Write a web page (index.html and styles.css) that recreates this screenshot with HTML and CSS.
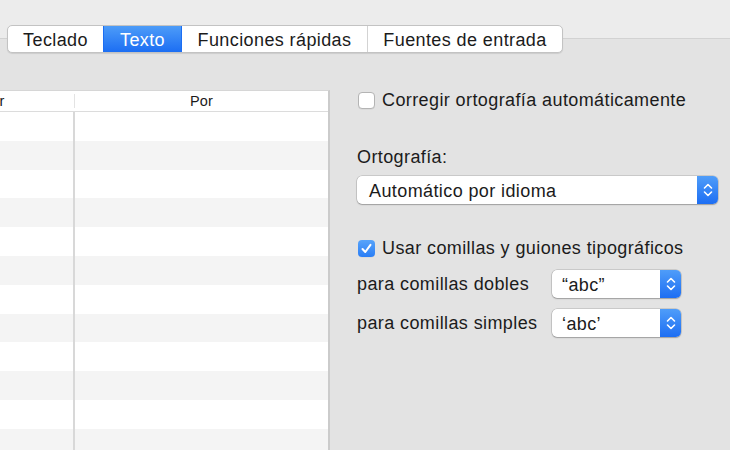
FILE: index.html
```html
<!DOCTYPE html>
<html lang="es">
<head>
<meta charset="utf-8">
<title>Texto</title>
<link rel="stylesheet" href="styles.css">
</head>
<body>
<div class="top">
  <div class="tabs">
    <div class="tab tab-teclado">Teclado</div>
    <div class="tab tab-texto active">Texto</div>
    <div class="tab tab-funciones">Funciones rápidas</div>
    <div class="tab tab-fuentes">Fuentes de entrada</div>
  </div>
</div>
<div class="content">
  <div class="table">
    <div class="thead">
      <div class="h1">Reemplazar</div>
      <div class="h2">Por</div>
    </div>
    <div class="tbody">
      <div class="row"><div class="c1"></div><div class="c2"></div></div>
      <div class="row"><div class="c1"></div><div class="c2"></div></div>
      <div class="row"><div class="c1"></div><div class="c2"></div></div>
      <div class="row"><div class="c1"></div><div class="c2"></div></div>
      <div class="row"><div class="c1"></div><div class="c2"></div></div>
      <div class="row"><div class="c1"></div><div class="c2"></div></div>
      <div class="row"><div class="c1"></div><div class="c2"></div></div>
      <div class="row"><div class="c1"></div><div class="c2"></div></div>
      <div class="row"><div class="c1"></div><div class="c2"></div></div>
      <div class="row"><div class="c1"></div><div class="c2"></div></div>
      <div class="row"><div class="c1"></div><div class="c2"></div></div>
      <div class="row"><div class="c1"></div><div class="c2"></div></div>
    </div>
  </div>
  <div class="panel">
    <label class="check-row row-corregir">
      <span class="box"></span>
      <span class="label">Corregir ortografía automáticamente</span>
    </label>
    <div class="field-label">Ortografía:</div>
    <div class="popup popup-wide">
      <span class="popup-text">Automático por idioma</span>
      <span class="stepper">
        <svg width="10" height="16" viewBox="0 0 10 16"><path d="M1.5 6 L5 2.5 L8.5 6 M1.5 10 L5 13.5 L8.5 10" fill="none" stroke="#fff" stroke-width="1.6" stroke-linecap="round" stroke-linejoin="round"/></svg>
      </span>
    </div>
    <label class="check-row row-usar">
      <span class="box checked">
        <svg width="13" height="13" viewBox="0 0 13 13"><path d="M2.5 7 L5.3 10 L10.5 2.8" fill="none" stroke="#fff" stroke-width="2" stroke-linecap="round" stroke-linejoin="round"/></svg>
      </span>
      <span class="label">Usar comillas y guiones tipográficos</span>
    </label>
    <div class="quote-row row-dobles">
      <span class="quote-label">para comillas dobles</span>
      <div class="popup popup-small">
        <span class="popup-text">“abc”</span>
        <span class="stepper">
          <svg width="10" height="16" viewBox="0 0 10 16"><path d="M1.5 6 L5 2.5 L8.5 6 M1.5 10 L5 13.5 L8.5 10" fill="none" stroke="#fff" stroke-width="1.6" stroke-linecap="round" stroke-linejoin="round"/></svg>
        </span>
      </div>
    </div>
    <div class="quote-row row-simples">
      <span class="quote-label">para comillas simples</span>
      <div class="popup popup-small">
        <span class="popup-text">‘abc’</span>
        <span class="stepper">
          <svg width="10" height="16" viewBox="0 0 10 16"><path d="M1.5 6 L5 2.5 L8.5 6 M1.5 10 L5 13.5 L8.5 10" fill="none" stroke="#fff" stroke-width="1.6" stroke-linecap="round" stroke-linejoin="round"/></svg>
        </span>
      </div>
    </div>
  </div>
</div>
</body>
</html>
```
FILE: styles.css
```css
* { box-sizing: border-box; }
html, body {
  margin: 0;
  height: 450px;
  overflow: hidden;
}
body {
  font-family: "Liberation Sans", Arial, sans-serif;
  font-size: 18px;
  letter-spacing: 0.4px;
  color: #1b1b1b;
  background: linear-gradient(to bottom, #ececec 0, #ececec 38px, #d2d2d2 38px, #d2d2d2 39px, #e3e3e3 39px);
}
.top {
  padding: 25px 0 0 7px;
  display: flex;
}
.tabs {
  display: flex;
  height: 28px;
  background: #fff;
  border: 1px solid #c3c3c3;
  border-radius: 5px;
  overflow: hidden;
  box-shadow: 0 1px 1px rgba(0,0,0,0.10);
}
.tab {
  display: flex;
  align-items: center;
  justify-content: center;
  line-height: 26px;
  padding-top: 1px;
  border-left: 1px solid #d3d3d3;
}
.tab-teclado { width: 95px; border-left: none; }
.tab-texto { width: 78px; }
.tab-funciones { width: 186px; }
.tab-fuentes { width: 195px; }
.tab.active {
  background: linear-gradient(to bottom, #4d9cf8, #1c6ef3);
  color: #fff;
  border-left-color: #1c6ef3;
}
.tab.active + .tab { border-left-color: #1c6ef3; }

.content {
  display: flex;
  padding-top: 37px;
  gap: 27px;
}
.table {
  width: 476px;
  margin-left: -146px;
  flex: none;
  background: #fff;
  border-top: 1px solid #d6d6d6;
  border-right: 2px solid #cbcbcb;
  height: 360px;
  overflow: hidden;
}
.thead {
  display: flex;
  height: 21px;
  border-bottom: 1px solid #dcdcdc;
  font-size: 14.5px;
  letter-spacing: 0.2px;
  line-height: 21px;
}
.h1 {
  width: 221px;
  text-align: center;
  position: relative;
}
.h1::after {
  content: "";
  position: absolute;
  right: 0;
  top: 3px;
  bottom: 3px;
  border-right: 1px solid #e3e3e3;
}
.h2 {
  flex: 1;
  text-align: center;
}
.row {
  display: flex;
  height: 28.8px;
}
.row:nth-child(even) { background: #f4f4f4; }
.c1 {
  width: 221px;
  border-right: 2px solid #d8d8d8;
}
.c2 { flex: 1; }

.panel {
  display: flex;
  flex-direction: column;
  align-items: flex-start;
  width: 361px;
}
.check-row {
  display: flex;
  align-items: center;
  height: 18px;
  line-height: 18px;
}
.row-corregir { margin-top: 1px; }
.row-usar { margin-top: 35px; }
.box {
  width: 17px;
  height: 17px;
  margin-left: 1px;
  margin-right: 7px;
  border-radius: 4px;
  background: #fff;
  border: 1px solid #b4b4b4;
  box-shadow: 0 0.5px 0.5px rgba(0,0,0,0.08);
  display: flex;
  align-items: center;
  justify-content: center;
}
.box.checked {
  border: none;
  background: linear-gradient(to bottom, #58a4fa, #2a7ef6);
}
.field-label {
  margin-top: 38px;
  line-height: 20px;
}
.popup {
  display: flex;
  align-items: center;
  height: 28px;
  background: #fff;
  border-radius: 5px;
  box-shadow: 0 0 0 0.5px rgba(0,0,0,0.22), 0 1px 1.5px rgba(0,0,0,0.22);
  overflow: hidden;
}
.popup-wide {
  width: 361px;
  margin-top: 9px;
}
.popup-small { width: 129px; }
.popup-text {
  flex: 1;
  padding-left: 12px;
  padding-top: 2px;
  line-height: 26px;
}
.popup-small .popup-text { padding-left: 10px; }
.stepper {
  width: 21px;
  height: 100%;
  display: flex;
  align-items: center;
  justify-content: center;
  background: linear-gradient(to bottom, #4f9df9, #1d6ef3);
}
.quote-row {
  display: flex;
  align-items: center;
  width: 100%;
}
.row-dobles { margin-top: 13px; }
.row-simples { margin-top: 11px; }
.quote-label {
  width: 195px;
  line-height: 20px;
}
```
